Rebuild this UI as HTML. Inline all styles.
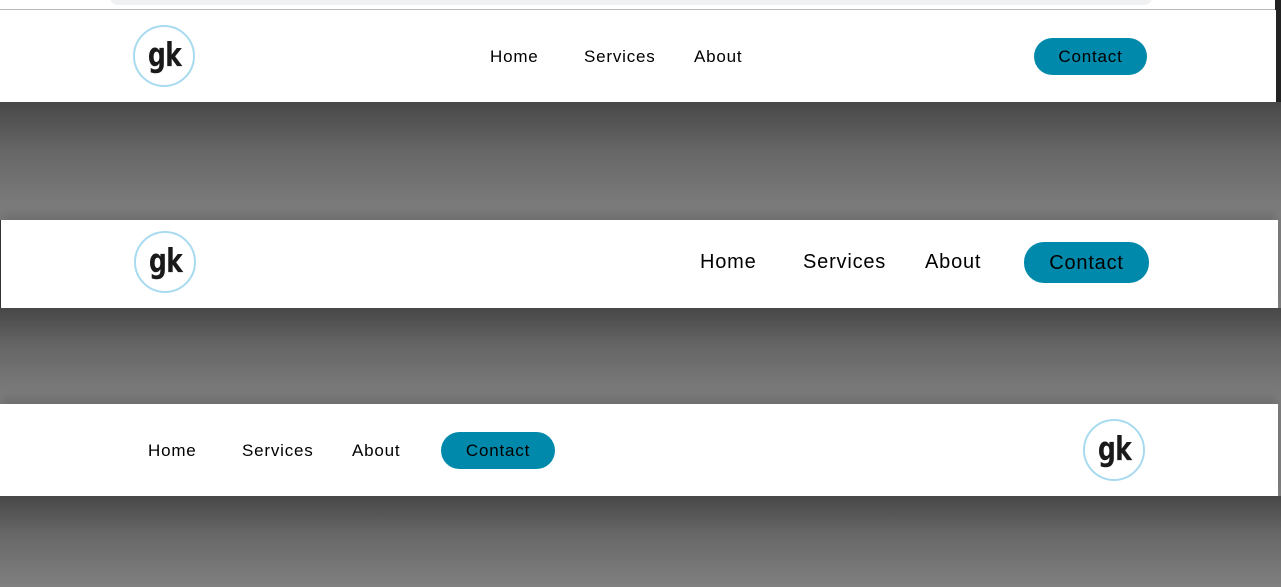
<!DOCTYPE html>
<html><head><meta charset="utf-8"><style>
*{margin:0;padding:0;box-sizing:border-box}
body{width:1281px;height:587px;overflow:hidden;background:#808080;position:relative;font-family:"Liberation Sans",sans-serif}
.a{position:absolute}
.gray{position:absolute;left:0;width:1281px;background:linear-gradient(to bottom,#474747 0%,#666 40%,#808080 100%)}
.nav{position:absolute;left:0;width:1276px;background:#fff}
.logo{position:absolute;width:62px;height:62px;border-radius:50%;border:2px solid #a8daf0;background:#fff;text-align:center;font-family:"DejaVu Sans Condensed","DejaVu Sans",sans-serif;font-weight:bold;font-size:33px;line-height:56px;color:#1a1a1a;letter-spacing:-1px}
.logo span{display:inline-block;transform:scaleX(0.85)}
.t{position:absolute;color:#000;white-space:nowrap;letter-spacing:0.8px}
.btn{position:absolute;background:#0089aa;border-radius:20px;color:#000;text-align:center;letter-spacing:0.8px}
</style></head><body>
<div class="a" style="left:0;top:0;width:1281px;height:10px;background:#fff;border-bottom:1px solid #bbb"></div>
<div class="a" style="left:110px;top:-10px;width:1042px;height:15px;background:#f0f1f3;border-radius:10px"></div>
<div class="a" style="left:1275px;top:0;width:6px;height:135px;background:#222"></div>

<div class="nav" style="top:10px;height:92px"></div>
<div class="logo" style="left:133px;top:25px"><span>gk</span></div>
<div class="t" style="left:490px;top:47px;font-size:17px">Home</div>
<div class="t" style="left:584px;top:47px;font-size:17px">Services</div>
<div class="t" style="left:694px;top:47px;font-size:17px">About</div>
<div class="btn" style="left:1034px;top:38px;width:113px;height:37px;font-size:17px;line-height:37px">Contact</div>

<div class="gray" style="top:102px;height:118px"></div>
<div class="nav" style="top:220px;height:88px;width:1278px;border-left:1px solid #333;box-shadow:0 -6px 10px rgba(0,0,0,.15)"></div>
<div class="logo" style="left:134px;top:231px"><span>gk</span></div>
<div class="t" style="left:700px;top:251px;font-size:20px">Home</div>
<div class="t" style="left:803px;top:251px;font-size:20px">Services</div>
<div class="t" style="left:925px;top:251px;font-size:20px">About</div>
<div class="btn" style="left:1024px;top:242px;width:125px;height:41px;font-size:20px;line-height:42px">Contact</div>

<div class="gray" style="top:308px;height:96px"></div>
<div class="nav" style="top:404px;height:92px;width:1278px;box-shadow:0 -6px 10px rgba(0,0,0,.15)"></div>
<div class="logo" style="left:1083px;top:419px"><span>gk</span></div>
<div class="t" style="left:148px;top:441px;font-size:17px">Home</div>
<div class="t" style="left:242px;top:441px;font-size:17px">Services</div>
<div class="t" style="left:352px;top:441px;font-size:17px">About</div>
<div class="btn" style="left:441px;top:432px;width:114px;height:37px;font-size:17px;line-height:37px">Contact</div>

<div class="gray" style="top:496px;height:91px"></div>
</body></html>
